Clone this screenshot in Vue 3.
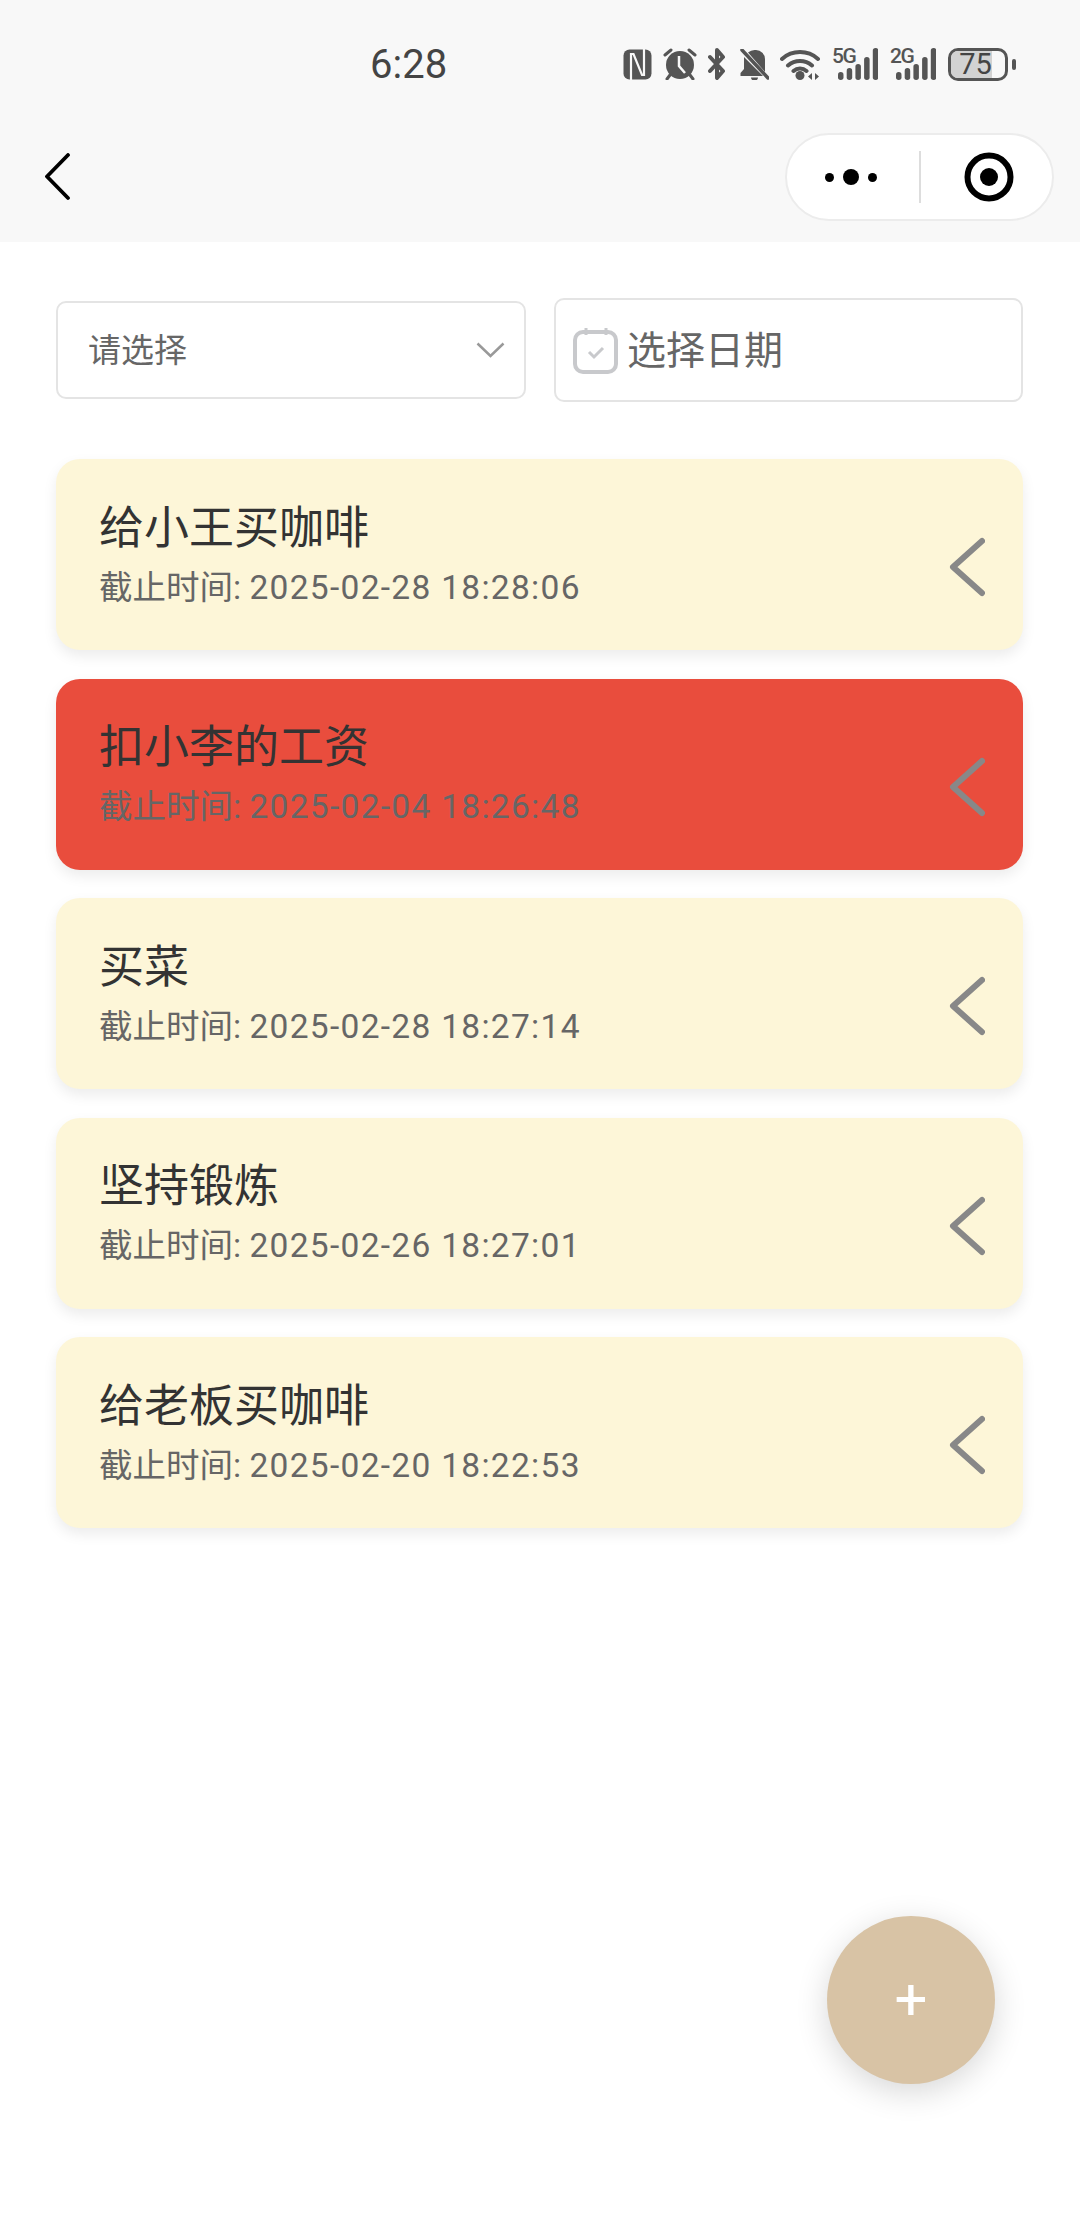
<template>
  <div class="page">
    <header class="topbar">
      <div class="status">
        <span class="time">6:28</span>
        <div class="status-icons">
          <!-- NFC -->
          <svg class="ic" width="29" height="31" viewBox="0 0 29 31">
            <rect x="0.500" y="0.500" width="28" height="30" rx="6" fill="#555" />
            <path d="M8 31V5h2.500l8.500 21h2V0" stroke="#f8f8f8" stroke-width="2.200" fill="none" />
          </svg>
          <!-- Alarm -->
          <svg class="ic" width="34" height="32" viewBox="0 0 34 32">
            <circle cx="17" cy="17" r="14" fill="#555" />
            <path d="M2 7l6-5M32 7l-6-5M7 27l-3 4M27 27l3 4" stroke="#555" stroke-width="3" stroke-linecap="round" fill="none" />
            <path d="M16 8v10l6 7" stroke="#f8f8f8" stroke-width="2.500" fill="none" />
          </svg>
          <!-- Bluetooth -->
          <svg class="ic ic-bt" width="17" height="32" viewBox="0 0 17 32">
            <path d="M2 9l13 14-6 7V2l6 7L2 23" stroke="#555" stroke-width="4" stroke-linejoin="round" stroke-linecap="round" fill="none" />
          </svg>
          <!-- Bell off -->
          <svg class="ic" width="29" height="31" viewBox="0 0 29 31">
            <path d="M4 8v12l-3.500 4v3H23z" fill="#555" />
            <path d="M8 3.500A10 10 0 0 1 15 1h1a9 9 0 0 1 9 9v13z" fill="#555" />
            <path d="M11 28.500h7a3.500 3 0 0 1-7 0z" fill="#555" />
            <path d="M2 1l26 28" stroke="#555" stroke-width="3.500" stroke-linecap="round" />
          </svg>
          <!-- Wifi -->
          <svg class="ic" width="41" height="32" viewBox="0 0 41 32">
            <path d="M2 11a27 27 0 0 1 36 0M8 17.500a18 18 0 0 1 24 0M13.500 23a10 10 0 0 1 13 0" stroke="#555" stroke-width="4" stroke-linecap="round" fill="none" />
            <circle cx="20" cy="27.500" r="4.500" fill="#555" />
            <path d="M32 25v7l-4-3.500zM35 25v7l4-3.500z" fill="#555" />
          </svg>
          <!-- Signal, 5G -->
          <div class="signal">
            <span class="net">5G</span>
            <svg width="40" height="32" viewBox="0 0 40 32">
              <rect v-for="(h, i) in bars" :key="i" :x="i * 8.700" :y="32 - h" width="5.500" :height="h" rx="2.700" fill="#555" />
            </svg>
          </div>
          <!-- Signal, 2G -->
          <div class="signal">
            <span class="net">2G</span>
            <svg width="40" height="32" viewBox="0 0 40 32">
              <rect v-for="(h, i) in bars" :key="i" :x="i * 8.700" :y="32 - h" width="5.500" :height="h" rx="2.700" fill="#555" />
            </svg>
          </div>
          <!-- Battery -->
          <div class="battery">
            <div class="battery-fill"></div>
            <span class="battery-text">75</span>
          </div>
          <div class="battery-tip"></div>
        </div>
      </div>
      <div class="navbar">
        <svg class="back" width="26" height="48" viewBox="0 0 26 48">
          <path d="M23 2L2 23.500 23 45" stroke="#000" stroke-width="3.800" stroke-linecap="round" stroke-linejoin="round" fill="none" />
        </svg>
        <div class="capsule">
          <div class="capsule-dots">
            <i class="dot"></i>
            <i class="dot dot-big"></i>
            <i class="dot"></i>
          </div>
          <div class="capsule-line"></div>
          <svg width="52" height="52" viewBox="0 0 52 52">
            <circle cx="26" cy="26" r="21.500" stroke="#000" stroke-width="6" fill="none" />
            <circle cx="26" cy="26" r="9" fill="#000" />
          </svg>
        </div>
      </div>
    </header>

    <main class="content">
      <div class="filters">
        <div class="select">
          <span class="select-text">请选择</span>
          <svg width="29" height="16" viewBox="0 0 29 16">
            <path d="M1.500 1.500L14.500 14 27.500 1.500" stroke="#999" stroke-width="2.500" fill="none" />
          </svg>
        </div>
        <div class="date-box">
          <svg width="46" height="47" viewBox="0 0 46 47">
            <rect x="2" y="5" width="41" height="40" rx="8" stroke="#c8c9cc" stroke-width="4" fill="none" />
            <path d="M13 1v7M33 1v7" stroke="#c8c9cc" stroke-width="3" />
            <path d="M16 25l5 5 9-9" stroke="#c8c9cc" stroke-width="3" fill="none" />
          </svg>
          <span class="date-text">选择日期</span>
        </div>
      </div>

      <div class="list">
        <div v-for="todo in todos" :key="todo.title" :class="['card', { overdue: todo.overdue }]">
          <div class="card-body">
            <div class="card-title">{{ todo.title }}</div>
            <div class="card-time">截止时间: <span class="card-date">{{ todo.deadline }}</span></div>
          </div>
          <svg class="card-arrow" width="36" height="62" viewBox="0 0 36 62">
            <path d="M33 5L4 31l29 26" stroke="#888" stroke-width="6" stroke-linecap="round" stroke-linejoin="round" fill="none" />
          </svg>
        </div>
      </div>
    </main>

    <button class="fab">+</button>
  </div>
</template>

<script setup>
const bars = [8, 12, 16, 23, 32]

const todos = [
  { title: '给小王买咖啡', deadline: '2025-02-28 18:28:06' },
  { title: '扣小李的工资', deadline: '2025-02-04 18:26:48', overdue: true },
  { title: '买菜', deadline: '2025-02-28 18:27:14' },
  { title: '坚持锻炼', deadline: '2025-02-26 18:27:01' },
  { title: '给老板买咖啡', deadline: '2025-02-20 18:22:53' }
]
</script>

<style>
body {
  margin: 0;
  background: #fff;
}
</style>

<style scoped>
.page {
  position: relative;
  width: 1080px;
  height: 2228px;
  overflow: hidden;
  background: #fff;
  font-family: Roboto, "Noto Sans CJK SC", sans-serif;
}

.topbar {
  height: 242px;
  background: #f8f8f8;
}

.status {
  display: flex;
  align-items: center;
  height: 128px;
  padding-left: 370px;
  box-sizing: border-box;
}

.time {
  font-size: 40px;
  font-weight: 400;
  color: #444;
  width: 253px;
}

.status-icons {
  display: flex;
  align-items: center;
}

.ic { flex-shrink: 0; margin-right: 11px; }
.ic-bt { margin-right: 15px; }

.signal {
  position: relative;
  width: 46px;
  height: 32px;
  margin-right: 12px;
  display: flex;
  justify-content: flex-end;
}

.net {
  position: absolute;
  left: 0;
  top: -1px;
  font-size: 21px;
  line-height: 18px;
  letter-spacing: -1.500px;
  font-weight: 500;
  color: #555;
}

.battery {
  position: relative;
  width: 60px;
  height: 33px;
  box-sizing: border-box;
  border: 3px solid #555;
  border-radius: 10px;
  overflow: hidden;
  display: flex;
  align-items: center;
  justify-content: center;
}

.battery-fill {
  position: absolute;
  left: 0;
  top: 0;
  bottom: 0;
  width: 75%;
  background: #d2d2d2;
}

.battery-text {
  position: relative;
  font-size: 29px;
  line-height: 1;
  color: #444;
  margin-left: -5px;
}

.battery-tip {
  width: 4px;
  height: 11px;
  margin-left: 4px;
  border-radius: 2px;
  background: #555;
}

.navbar {
  display: flex;
  align-items: center;
  justify-content: space-between;
  height: 88px;
  margin-top: 5px;
  padding: 0 26px 0 45px;
}

.capsule {
  display: flex;
  align-items: center;
  width: 269px;
  height: 88px;
  box-sizing: border-box;
  padding: 0 0 0 38px;
  border: 2px solid #ececec;
  border-radius: 44px;
  background: #fff;
}

.capsule-dots {
  display: flex;
  align-items: center;
  gap: 9px;
}

.dot {
  width: 9px;
  height: 9px;
  border-radius: 50%;
  background: #000;
}

.dot-big {
  width: 16px;
  height: 16px;
}

.capsule-line {
  width: 1.500px;
  height: 52px;
  margin: 0 42px;
  background: #ddd;
}

.content {
  padding: 56px 57px 0 56px;
}

.filters {
  display: flex;
  align-items: center;
  gap: 28px;
}

.select {
  display: flex;
  align-items: center;
  justify-content: space-between;
  box-sizing: border-box;
  width: 470px;
  height: 98px;
  padding: 0 19px 0 30px;
  border: 2px solid #e4e4e4;
  border-radius: 10px;
  font-size: 33px;
  color: #666;
}

.select-text {
  margin-bottom: 5px;
}

.date-box {
  display: flex;
  align-items: center;
  gap: 8px;
  box-sizing: border-box;
  width: 469px;
  height: 104px;
  padding: 0 17px;
  border: 2px solid #e4e4e4;
  border-radius: 10px;
  font-size: 39px;
  color: #666;
}

.date-text {
  margin-bottom: 6px;
}

.list {
  display: flex;
  flex-direction: column;
  gap: 28.500px;
  margin-top: 57px;
}

.card {
  display: flex;
  align-items: center;
  justify-content: space-between;
  box-sizing: border-box;
  height: 191px;
  padding: 0 38px 0 43px;
  border-radius: 24px;
  background: #fdf6d8;
  box-shadow: 0 6px 14px rgba(0, 0, 0, 0.08);
}

.card.overdue {
  background: #e94d3d;
}

.card-body {
  margin-top: -1px;
}

.card-title {
  font-size: 45px;
  line-height: 60px;
  color: #333;
}

.card-time {
  margin-top: 7px;
  font-size: 33.500px;
  line-height: 44px;
  color: #666;
}

.card-date {
  letter-spacing: 1.300px;
}

.card-arrow {
  margin-top: 25px;
}

.fab {
  position: absolute;
  left: 827px;
  top: 1916px;
  width: 168px;
  height: 168px;
  padding: 0 0 2px;
  border: 0;
  border-radius: 50%;
  background: #d8c3a5;
  box-shadow: 0 8px 32px rgba(0, 0, 0, 0.16);
  font-family: Roboto, sans-serif;
  font-size: 58px;
  line-height: 1;
  color: #fff;
}
</style>
